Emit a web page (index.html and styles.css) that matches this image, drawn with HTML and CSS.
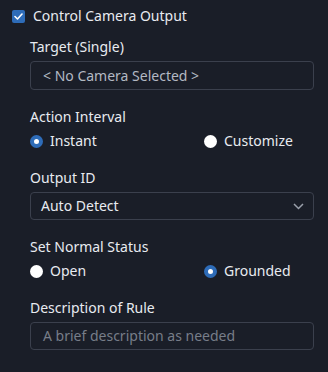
FILE: index.html
```html
<!DOCTYPE html>
<html lang="en">
<head>
    <meta charset="UTF-8">
    <meta name="viewport" content="width=device-width, initial-scale=1.0">
    <title>Control Camera Output</title>
    <link rel="stylesheet" href="styles.css">
</head>
<body>
    <div class="panel">
        <div class="header">
            <span class="checkbox checked">
                <svg width="9" height="7" viewBox="0 0 9 7"><path d="M1 3.5 L3.5 6 L8 1" fill="none" stroke="#fff" stroke-width="1.6" stroke-linecap="round" stroke-linejoin="round"/></svg>
            </span>
            <span>Control Camera Output</span>
        </div>

        <div class="form">
            <div class="field">
                <div class="label">Target (Single)</div>
                <div class="input input-tall muted">&lt; No Camera Selected &gt;</div>
            </div>

            <div class="field">
                <div class="label">Action Interval</div>
                <div class="radio-row">
                    <div class="radio-item"><span class="radio checked"></span>Instant</div>
                    <div class="radio-item"><span class="radio"></span>Customize</div>
                </div>
            </div>

            <div class="field">
                <div class="label">Output ID</div>
                <div class="input select">
                    <span>Auto Detect</span>
                    <svg width="11" height="7" viewBox="0 0 11 7"><path d="M1 1 L5.5 5.5 L10 1" fill="none" stroke="#9aa0ab" stroke-width="1.5"/></svg>
                </div>
            </div>

            <div class="field">
                <div class="label">Set Normal Status</div>
                <div class="radio-row">
                    <div class="radio-item"><span class="radio"></span>Open</div>
                    <div class="radio-item"><span class="radio checked"></span>Grounded</div>
                </div>
            </div>

            <div class="field">
                <div class="label">Description of Rule</div>
                <div class="input placeholder">A brief description as needed</div>
            </div>
        </div>
    </div>
</body>
</html>
```

FILE: styles.css
```css
:root {
    --color-bg: #1a1e28;
    --color-text: #e8ebf0;
    --color-border: #3b404d;
    --color-accent: #2e6cb8;
}

body {
    margin: 0;
    background: var(--color-bg);
    color: var(--color-text);
    font-family: 'Noto Sans', 'Open Sans', sans-serif;
    font-size: 14px;
    line-height: 20px;
}

.panel {
    padding: 6px 14px 0 12px;
}

.header {
    display: flex;
    align-items: center;
    gap: 8px;
    margin-bottom: 11px;
}

.checkbox {
    width: 13px;
    height: 13px;
    border-radius: 2px;
    display: flex;
    align-items: center;
    justify-content: center;
    background: white;
}

.checkbox.checked {
    background: var(--color-accent);
}

.form {
    display: flex;
    flex-direction: column;
    gap: 17px;
    padding-left: 18px;
}

.label {
    margin-bottom: 4px;
}

.input {
    box-sizing: border-box;
    height: 28px;
    border: 1px solid var(--color-border);
    border-radius: 4px;
    padding: 0 12px;
    display: flex;
    align-items: center;
}

.input-tall {
    height: 29px;
}

.muted {
    color: #b3b9c3;
}

.placeholder {
    color: #777d88;
}

.select {
    justify-content: space-between;
    padding: 0 9px 0 10px;
}

.radio-row {
    display: grid;
    grid-template-columns: 174px 1fr;
    margin-top: 1px;
}

.radio-item {
    display: flex;
    align-items: center;
    gap: 7px;
}

.radio {
    width: 13px;
    height: 13px;
    border-radius: 50%;
    background: white;
    box-sizing: border-box;
}

.radio.checked {
    background: white;
    border: 4px solid var(--color-accent);
}
```
